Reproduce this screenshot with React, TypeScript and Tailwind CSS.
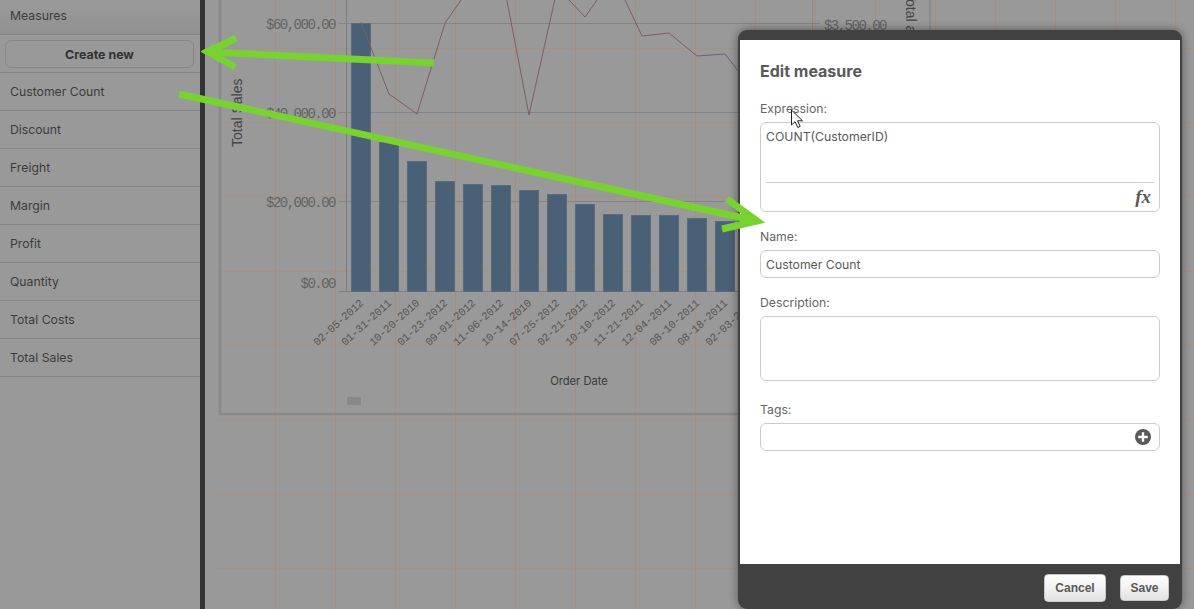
const measures = ['Customer Count', 'Discount', 'Freight', 'Margin', 'Profit', 'Quantity', 'Total Costs', 'Total Sales'];

const barTops = [23, 142, 161, 181, 184, 185, 190, 194, 204, 214, 215, 215, 218, 221, 219];
const dates = [
  '02-05-2012', '01-31-2011', '10-20-2010', '01-23-2012', '09-01-2012',
  '11-06-2012', '10-14-2010', '07-25-2012', '02-21-2012', '10-10-2012',
  '11-21-2011', '12-04-2011', '08-10-2011', '08-18-2011', '02-03-2012',
];
const gridX = [275, 335, 395, 455, 515, 575, 635, 695, 755, 815, 875, 935, 995, 1055, 1115, 1175];
const gridY = [48, 122, 196, 271, 345, 419, 494, 568];
const linePoints =
  '361,22 389,94 417,114 445,23 473,-17 501,-30 529,115 557,-10 569,0 585,17 597,0 613,-20 625,0 642,36 669,33 697,56 725,54 753,90';

function BackgroundChart() {
  return (
    <svg className="block h-[609px] w-[989px]" viewBox="205 0 989 609">
      {gridX.map((x) => (
        <line key={x} x1={x + 0.5} y1={0} x2={x + 0.5} y2={609} stroke="#a38f82" />
      ))}
      {gridY.map((y) => (
        <line key={y} x1={216} y1={y + 0.5} x2={1194} y2={y + 0.5} stroke="#a69282" />
      ))}

      {/* frame of the sheet objects */}
      <path d="M220 0V414H812" fill="none" stroke="#898989" strokeWidth="2.5" />
      <line x1={812.5} y1={0} x2={812.5} y2={40} stroke="#8a8a8a" />
      <line x1={930} y1={0} x2={930} y2={40} stroke="#8a8a8a" strokeWidth="2" />

      {/* value gridlines and axes */}
      <line x1={339} y1={23.5} x2={820} y2={23.5} stroke="#848484" />
      <line x1={339} y1={112.5} x2={740} y2={112.5} stroke="#848484" />
      <line x1={339} y1={201.5} x2={740} y2={201.5} stroke="#848484" />
      <line x1={346.5} y1={0} x2={346.5} y2={292} stroke="#7d7d7d" />
      <line x1={339} y1={291.5} x2={740} y2={291.5} stroke="#7d7d7d" />

      {barTops.map((top, i) => (
        <rect
          key={i}
          x={351.5 + i * 28}
          y={top + 0.5}
          width={19}
          height={291 - top}
          fill="#4a6076"
          stroke="#596b7e"
        />
      ))}
      <polyline points={linePoints} fill="none" stroke="#7d5c66" strokeWidth="1" />

      <g fontFamily="'Liberation Mono', monospace" fontSize="14" letterSpacing="-1.5" fill="#646464" textAnchor="end">
        <text x={335} y={29}>$60,000.00</text>
        <text x={335} y={118}>$40,000.00</text>
        <text x={335} y={207}>$20,000.00</text>
        <text x={335} y={288}>$0.00</text>
        <text x={886} y={30}>$3,500.00</text>
      </g>

      <g fontFamily="'Liberation Mono', monospace" fontSize="11" letterSpacing="-0.3" fill="#565656" textAnchor="end">
        {dates.map((date, i) => (
          <text key={date} transform={`translate(${364 + i * 28} 304) rotate(-42)`}>
            {date}
          </text>
        ))}
      </g>

      <g fontFamily="'Liberation Sans', sans-serif" fontSize="14" fill="#454545">
        <text transform="translate(242 147) rotate(-90)">Total Sales</text>
        <text transform="translate(906 -8) rotate(90)">Total amount</text>
      </g>
      <text x={579} y={385} textAnchor="middle" fontFamily="Inter, sans-serif" fontSize="11.2" fill="#3a3a3a">
        Order Date
      </text>
      <rect x={347} y={397} width={14} height={8} fill="#888888" />
    </svg>
  );
}

function Arrows() {
  return (
    <svg className="absolute left-0 top-0 h-[609px] w-[1194px]" viewBox="0 0 1194 609">
      <g fill="none" stroke="#78d232" strokeWidth="7">
        <path d="M434 63L208 52" />
        <path d="M236 38L208 52L235 67" />
        <path d="M179 94L752 220" />
        <path d="M727 199L757 221L722 229" />
      </g>
      <path d="M201 51L214 44V58Z" fill="#78d232" />
      <path d="M762 221L750 212L750 226Z" fill="#78d232" />
    </svg>
  );
}

function Cursor() {
  return (
    <svg className="absolute left-[790px] top-[109px] h-[20px] w-[14px]" viewBox="0 0 14 20">
      <path d="M1.5 1V16L5 12.7L7.8 18.5L10.2 17.4L7.5 11.8H12.5Z" fill="#ffffff" stroke="#222222" strokeWidth="1" />
    </svg>
  );
}

function FieldLabel({ children, className }: { children: string; className: string }) {
  return <div className={`h-4 text-[12.25px] leading-4 text-[#666666] ${className}`}>{children}</div>;
}

function EditMeasureDialog() {
  return (
    <div className="absolute left-[738px] top-[30px] flex h-[579px] w-[444px] flex-col overflow-hidden rounded-[9px] bg-[#414141] px-[2px] pt-[10px] font-[Inter,sans-serif] shadow-[0_0_10px_rgba(0,0,0,0.45)]">
      <div className="flex-1 bg-white px-5 pt-[21px]">
        <h2 className="h-5 text-base font-bold leading-5 text-[#595959]">Edit measure</h2>

        <FieldLabel className="mt-5">Expression:</FieldLabel>
        <div className="mt-[5px] flex h-[90px] flex-col rounded-md border border-[#cccccc] px-[5px]">
          <div className="h-[60px] shrink-0 border-b border-[#cccccc] pt-[6px] text-[12.25px] leading-4 text-[#595959]">
            COUNT(CustomerID)
          </div>
          <div className="flex flex-1 items-center justify-end pr-[3px] font-['Liberation_Serif',serif] text-[19px] font-bold italic text-[#595959]">
            fx
          </div>
        </div>

        <FieldLabel className="mt-[17px]">Name:</FieldLabel>
        <div className="mt-[5px] flex h-7 items-center rounded-md border border-[#cccccc] px-[5px] pt-[2px] text-[12.25px] text-[#595959]">
          Customer Count
        </div>

        <FieldLabel className="mt-[17px]">Description:</FieldLabel>
        <div className="mt-[5px] h-[65px] rounded-md border border-[#cccccc]" />

        <FieldLabel className="mt-[21px]">Tags:</FieldLabel>
        <div className="mt-[5px] flex h-7 items-center justify-end rounded-md border border-[#cccccc] pr-[8px]">
          <svg className="h-4 w-4" viewBox="0 0 16 16">
            <circle cx="8" cy="8" r="8" fill="#595959" />
            <path d="M8 3.2V12.8M3.2 8H12.8" stroke="#ffffff" strokeWidth="2.4" />
          </svg>
        </div>
      </div>

      <div className="-mx-[2px] flex h-[45px] items-center justify-end gap-[14px] pr-[13px] pt-[3px] font-['Liberation_Sans',sans-serif] text-xs font-bold text-[#595959]">
        <button className="h-7 w-[62px] rounded border border-[#c8c8c8] bg-gradient-to-b from-white to-[#e3e3e3]">Cancel</button>
        <button className="h-[26px] w-[49px] rounded border border-[#c8c8c8] bg-gradient-to-b from-white to-[#e3e3e3]">Save</button>
      </div>
    </div>
  );
}

export default function App() {
  return (
    <div className="relative flex h-[609px] w-[1194px] overflow-hidden bg-[#999999] font-[Inter,sans-serif]">
      <aside className="w-[200px] shrink-0 text-[12.25px] text-[#3c3c3c]">
        <div className="flex h-[35px] items-center border-b border-[#858585] bg-gradient-to-b from-[#9b9b9b] to-[#909090] px-[10px] pb-[1px]">
          Measures
        </div>
        <div className="flex h-[38px] items-center border-b border-[#858585] px-[5px]">
          <button className="h-7 w-[189px] rounded-md border border-[#868686] bg-[#999999] pt-[3px] text-[12.4px] font-bold text-[#333333]">
            Create new
          </button>
        </div>
        {measures.map((name) => (
          <div key={name} className="flex h-[38px] items-center border-b border-[#858585] px-[10px] pt-[1px]">
            {name}
          </div>
        ))}
      </aside>
      <div className="w-[5px] shrink-0 bg-[#333333]" />
      <BackgroundChart />
      <EditMeasureDialog />
      <Arrows />
      <Cursor />
    </div>
  );
}
